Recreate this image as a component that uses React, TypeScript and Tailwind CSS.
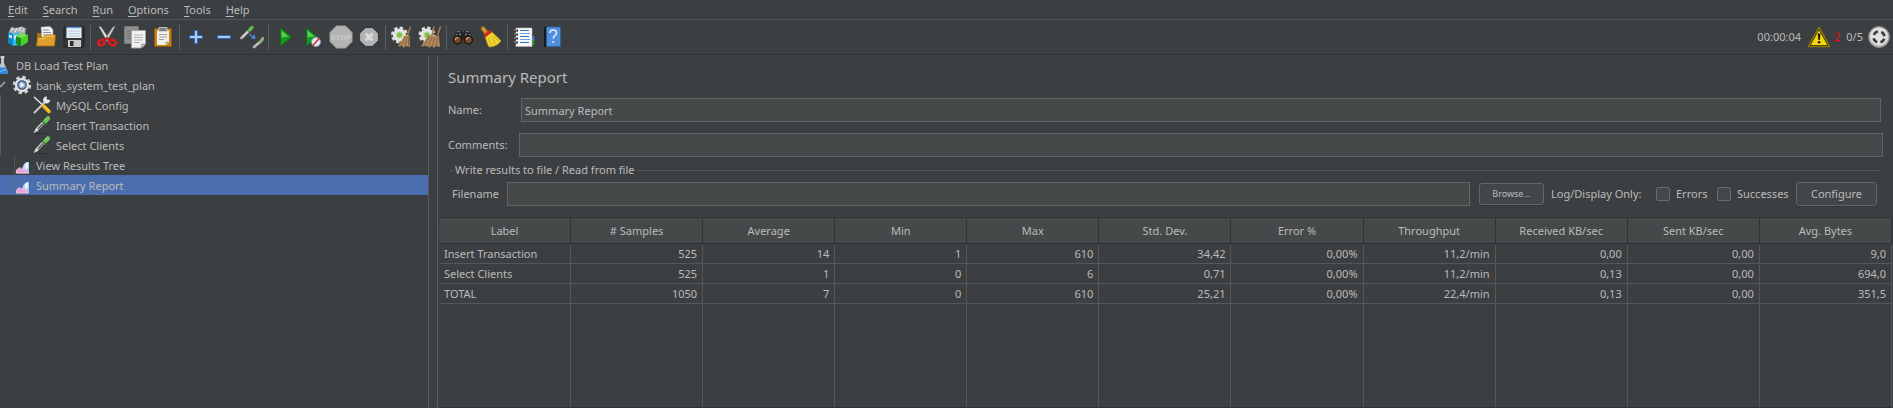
import React, { type ReactNode } from "react";

const menus = ["Edit", "Search", "Run", "Options", "Tools", "Help"];

const columns = [
  "Label", "# Samples", "Average", "Min", "Max", "Std. Dev.", "Error %",
  "Throughput", "Received KB/sec", "Sent KB/sec", "Avg. Bytes",
];

const rows = [
  ["Insert Transaction", "525", "14", "1", "610", "34,42", "0,00%", "11,2/min", "0,00", "0,00", "9,0"],
  ["Select Clients", "525", "1", "0", "6", "0,71", "0,00%", "11,2/min", "0,13", "0,00", "694,0"],
  ["TOTAL", "1050", "7", "0", "610", "25,21", "0,00%", "22,4/min", "0,13", "0,00", "351,5"],
];

function Icon({ children }: { children: ReactNode }) {
  return (
    <svg viewBox="0 0 24 24" className="size-6 shrink-0" aria-hidden="true">
      {children}
    </svg>
  );
}

function Templates() {
  return (
    <Icon>
      <path d="M3 7 5 2l5 1 6-1.500 4 2L19 11H4z" fill="#a3b1b8" />
      <path d="m5 6 2-3M9 7l2-4M13 6l2-4M16 7l2-3" stroke="#e4eaec" strokeWidth="1.200" />
      <path d="m2 7 5 2v12l-5-3z" fill="#1286c4" />
      <path d="m7 9 6-2v13l-6 1z" fill="#35b8ec" />
      <path d="M3 9.500l3 1v3l-3-1zM8 10.500l3-1v4l-3 1z" fill="#bfeaf9" />
      <path d="m10 11 6-3 6 2-6 4z" fill="#7bdc50" />
      <path d="m10 11 5 3v7.500l-5-3z" fill="#1f8a1c" />
      <path d="m15 13.500 7-3.500v7l-7 4.500z" fill="#4cd32a" />
    </Icon>
  );
}

function OpenFile() {
  return (
    <Icon>
      <path d="M3 8h6l1 2v10H3z" fill="#a8700f" />
      <path d="m7 2 9-.5 3 3V15H8z" fill="#f3f3f3" stroke="#999" strokeWidth=".5" />
      <path d="M9 5h6M9 7.500h8M9.500 10H17" stroke="#8d8d8d" />
      <path d="M3.500 12.500h6l2-2.500h10l-1 11H2.500z" fill="#dfa02c" stroke="#a8700f" strokeWidth=".8" />
      <path d="M4.500 13.500h5.500l2-2.500H20.500" stroke="#f3c766" fill="none" />
    </Icon>
  );
}

function Save() {
  return (
    <Icon>
      <rect x="2" y="2" width="20" height="20" rx="1.500" fill="#343638" stroke="#1b1c1d" />
      <rect x="4.500" y="2" width="15" height="11" fill="#eaf2fa" />
      <path d="M4.500 2.500h15" stroke="#5f9ad8" strokeWidth="1.500" />
      <path d="M6 6h12M6 8.500h12M6 11h12" stroke="#a9bccf" strokeWidth=".8" />
      <rect x="6" y="15" width="13" height="7" fill="#c9cbcc" />
      <rect x="8" y="16" width="3.500" height="5" fill="#2b2c2d" />
    </Icon>
  );
}

function Cut() {
  return (
    <Icon>
      <path d="M4 1.500 6 2l8 12-2 2z" fill="#e8e8e8" stroke="#999" strokeWidth=".5" />
      <path d="m20 1.500-2 .5-8 12 2 2z" fill="#cfcfcf" stroke="#888" strokeWidth=".5" />
      <ellipse cx="6.500" cy="17.500" rx="3.400" ry="2.700" transform="rotate(-25 6.500 17.500)" fill="none" stroke="#e01b1b" strokeWidth="2.400" />
      <ellipse cx="17.500" cy="17.500" rx="3.400" ry="2.700" transform="rotate(25 17.500 17.500)" fill="none" stroke="#e01b1b" strokeWidth="2.400" />
      <path d="m9 15.500 3-2.500 3 2.500" stroke="#c01010" strokeWidth="2" fill="none" />
    </Icon>
  );
}

function Copy() {
  return (
    <Icon>
      <path d="M1.500 1.500h14v17h-14z" fill="#8e9090" stroke="#777" />
      <path d="M4 6h8M4 8.500h8M4 11h8M4 13.500h5" stroke="#6c6e6e" />
      <path d="M8.500 5.500h14V19l-4 4h-10z" fill="#f1f1ef" stroke="#a5a5a0" />
      <path d="M22.500 19h-4v4z" fill="#c4c4c0" stroke="#8b8b86" strokeWidth=".6" />
      <path d="M11 10h9M11 12.500h9M11 15h9M11 17.500h6" stroke="#b4b4b0" />
    </Icon>
  );
}

function Paste() {
  return (
    <Icon>
      <rect x="3.500" y="3.500" width="17" height="18" rx="1" fill="#c58218" stroke="#8f5a0a" />
      <path d="M6 5.500h12V17l-3 3H6z" fill="#f1f1ef" />
      <path d="M18 16.500h-3.500V20z" fill="#aaa" />
      <path d="M8 2.500h8v4H8z" fill="#7e8183" stroke="#d2d4d5" strokeWidth=".8" />
      <path d="M8 9.500h8M8 12h8M8 14.500h5" stroke="#a0a09c" />
    </Icon>
  );
}

function Plus() {
  return (
    <Icon>
      <path d="M10.500 5.500h3v5h5v3h-5v5h-3v-5h-5v-3h5z" fill="#a9cbf5" stroke="#2f66b8" />
    </Icon>
  );
}

function Minus() {
  return (
    <Icon>
      <path d="M5.500 10.500h13v3h-13z" fill="#a9cbf5" stroke="#2f66b8" />
    </Icon>
  );
}

function Toggle() {
  return (
    <Icon>
      <path d="m1.500 13 7-7" stroke="#b9b9b9" strokeWidth="2.600" strokeLinecap="round" />
      <path d="m2.500 12 5-5" stroke="#f6f6f6" strokeWidth="1" />
      <path d="m7.500 4.500 3.500 3.500" stroke="#444" strokeWidth="1.600" />
      <path d="m9.500 5 2.500-2.500" stroke="#6cb85a" strokeWidth="3.200" strokeLinecap="round" />
      <path d="m9 9 5 4" stroke="#4a86e0" strokeWidth="1.300" />
      <path d="m15.500 14-1-5-3.500 4.500z" fill="#4a86e0" />
      <path d="m14 22 6-5" stroke="#bdbdbd" strokeWidth="2.600" strokeLinecap="round" />
      <path d="m20.500 16.500 2.500-3" stroke="#86b07a" strokeWidth="3.200" strokeLinecap="round" />
    </Icon>
  );
}

function Run() {
  return (
    <Icon>
      <path d="m7.500 3 11 9-11 9z" fill="#159a1c" stroke="#0c6b12" strokeWidth=".8" />
      <path d="m8.500 5.500 7 6-7 1z" fill="#57d04f" />
    </Icon>
  );
}

function RunNoTimers() {
  return (
    <Icon>
      <path d="m5.500 3 11 9-11 9z" fill="#159a1c" stroke="#0c6b12" strokeWidth=".8" />
      <path d="m6.500 5.500 7 6-7 1z" fill="#57d04f" />
      <circle cx="15" cy="17" r="4.500" fill="#dfe9f5" stroke="#7f9fc8" />
      <path d="m11.500 21 7-8" stroke="#df2a2a" strokeWidth="1.500" />
    </Icon>
  );
}

function Stop() {
  return (
    <Icon>
      <path d="M7.500 1h9L23 7.500v9L16.500 23h-9L1 16.500v-9z" fill="#b3b3b3" stroke="#a6a6a6" />
      <text x="12" y="15" textAnchor="middle" fontSize="8" fontWeight="700" fontFamily="Roboto, sans-serif" fill="#cacaca">STOP</text>
    </Icon>
  );
}

function Shutdown() {
  return (
    <Icon>
      <path d="M8.500 3.500h7l5 5v7l-5 5h-7l-5-5v-7z" fill="#b3b3b3" stroke="#a6a6a6" />
      <path d="m8.500 8.500 7 7m0-7-7 7" stroke="#dadada" strokeWidth="3" />
    </Icon>
  );
}

function Gear({ cx, cy }: { cx: number; cy: number }) {
  return (
    <g>
      <circle cx={cx} cy={cy} r="7" fill="none" stroke="#dcdcdc" strokeWidth="3" strokeDasharray="3.200 2.298" />
      <circle cx={cx} cy={cy} r="6.600" fill="#e3e3e3" />
      <circle cx={cx} cy={cy} r="3" fill="#7cc243" stroke="#b9d79b" />
    </g>
  );
}

function Clear() {
  return (
    <Icon>
      <Gear cx={9.500} cy={10} />
      <path d="m20.500 1.500-3 9" stroke="#a47748" strokeWidth="1.600" />
      <path d="M14.500 10.500h5L20 22l-5-1-1 2-2-2-4 .5z" fill="#b0875b" />
      <path d="m15 12-4 9M17 12l-2 9M18.500 12v9" stroke="#85603b" strokeWidth=".8" />
    </Icon>
  );
}

function ClearAll() {
  return (
    <Icon>
      <Gear cx={9} cy={10} />
      <path d="m16 1.500-2 9M22.500 1.500l-3 9" stroke="#a47748" strokeWidth="1.600" />
      <path d="m10 10.500 4.500-1 2 2 4.500-1L22 22l-4-1-2 2-2-2-3 1.500-2-1.500-6 .5z" fill="#b0875b" />
      <path d="m11 12-5 9M14 12l-4 9M17 12l-3 9M20 12l-2 9" stroke="#85603b" strokeWidth=".8" />
    </Icon>
  );
}

function Binoculars() {
  return (
    <Icon>
      <path d="m5.500 6 4-1 2.500 3 2.500-3 4 1L22 14l-8 3-2-3-2 3-8-3z" fill="#232425" />
      <path d="m6 7 3-1M15 6l3 1M6 9l-2 3M18 9l2 3M9 8v3M15 8v3" stroke="#83878a" strokeWidth="1.200" />
      <circle cx="6.500" cy="15" r="4" fill="#7a4426" stroke="#191919" strokeWidth="1.500" />
      <circle cx="17.500" cy="15" r="4" fill="#7a4426" stroke="#191919" strokeWidth="1.500" />
      <path d="M4.500 15a2 2 0 0 1 3-2M15.500 15a2 2 0 0 1 3-2" stroke="#dba27c" strokeWidth="1.200" fill="none" />
    </Icon>
  );
}

function ResetSearch() {
  return (
    <Icon>
      <path d="m4 3.500 4 5" stroke="#a8741c" strokeWidth="4.500" strokeLinecap="round" />
      <path d="m4 3.500 3.500 4.500" stroke="#dba544" strokeWidth="2" strokeLinecap="round" />
      <path d="m6 11 7-4c4 4 7 6 9 9-3 4-7 6-12 6-2-3-3-7-4-11z" fill="#f0d532" stroke="#a98b10" strokeWidth=".8" />
      <path d="m9 13 4 8M12 12l5 7M13.500 10.500 20 16" stroke="#c4a61e" strokeWidth=".8" />
      <path d="m5.500 11 6.500-5" stroke="#d7261e" strokeWidth="3" />
    </Icon>
  );
}

function FunctionHelper() {
  return (
    <Icon>
      <path d="M17 11h5.500v4H17z" fill="#2c7be5" />
      <path d="M17 15h5.500v5H17z" fill="#1c8a2e" />
      <path d="M4 3h16v18.500H4z" fill="#f7f7f7" stroke="#bbb" strokeWidth=".6" />
      <path d="M8 5.500h9M8 11.500h9M8 17.500h9" stroke="#2f6fd0" strokeWidth="1.200" />
      <path d="M8 8.500h10M8 14.500h10" stroke="#6b9fe8" strokeWidth="1.200" />
      <path d="M2 5.500h4M2 9.500h4M2 13.500h4M2 17.500h4" stroke="#1f1f1f" strokeWidth="2" />
      <path d="M2 5h3M2 9h3M2 13h3M2 17h3" stroke="#d8d8d8" strokeWidth=".8" />
    </Icon>
  );
}

function Help() {
  return (
    <Icon>
      <path d="m4 2 3-.5V22H4z" fill="#161b22" />
      <path d="M6.500 2H20.500v19.500h-14z" fill="#4f8fdc" stroke="#2b5fa6" strokeWidth=".8" />
      <path d="M10 8c0-4 6.500-4 6.500 0 0 2.500-3.200 2.500-3.200 5.500" fill="none" stroke="#dbe9fb" strokeWidth="1.600" />
      <circle cx="13.200" cy="17" r="1.100" fill="#dbe9fb" />
    </Icon>
  );
}

const toolGroups: { name: string; icon: ReactNode }[][] = [
  [{ name: "Templates", icon: <Templates /> }, { name: "Open", icon: <OpenFile /> }, { name: "Save", icon: <Save /> }],
  [{ name: "Cut", icon: <Cut /> }, { name: "Copy", icon: <Copy /> }, { name: "Paste", icon: <Paste /> }],
  [{ name: "Expand all", icon: <Plus /> }, { name: "Collapse all", icon: <Minus /> }, { name: "Toggle", icon: <Toggle /> }],
  [
    { name: "Start", icon: <Run /> }, { name: "Start no pauses", icon: <RunNoTimers /> },
    { name: "Stop", icon: <Stop /> }, { name: "Shutdown", icon: <Shutdown /> },
  ],
  [{ name: "Clear", icon: <Clear /> }, { name: "Clear all", icon: <ClearAll /> }],
  [{ name: "Search", icon: <Binoculars /> }, { name: "Reset search", icon: <ResetSearch /> }],
  [{ name: "Function helper", icon: <FunctionHelper /> }, { name: "Help", icon: <Help /> }],
];

function Toolbar() {
  return (
    <div className="flex h-[35px] items-center border-b border-[#323232] pl-1 pr-[2px]">
      {toolGroups.map((group, i) => (
        <div key={i} className="flex items-center">
          {i > 0 && <span className="mx-[2px] h-[25px] w-px bg-[#5a5d5f]" />}
          {group.map((tool) => (
            <button key={tool.name} type="button" aria-label={tool.name} className="flex w-7 justify-center">
              {tool.icon}
            </button>
          ))}
        </div>
      ))}
      <div className="ml-auto flex items-center">
        <span>00:00:04</span>
        <button type="button" aria-label="Show log" className="ml-[6px]">
          <Icon>
            <path d="M12 2.500 22.500 21.500h-21z" fill="#f6d50f" stroke="#8a7706" strokeWidth="1.600" strokeLinejoin="round" />
            <path d="M12 4.500 21 20.500H3z" fill="none" stroke="#2e2a08" strokeWidth=".8" />
            <path d="M10.800 8.500h2.600l-.6 6.500h-1.400z" fill="#141414" />
            <circle cx="12.100" cy="17.300" r="1.300" fill="#141414" />
          </Icon>
        </button>
        <span className="ml-[3px] text-[#ff0000]">2</span>
        <span className="ml-[6px]">0/5</span>
        <span className="ml-1">
          <Icon>
            <circle cx="12" cy="12" r="10.500" fill="#b8b8b8" stroke="#858585" />
            <circle cx="12" cy="11.500" r="9" fill="#e2e2e2" />
            <circle cx="12" cy="12" r="5.500" fill="none" stroke="#3c3f41" strokeWidth="2.600" strokeDasharray="5.200 3.440" strokeDashoffset="-1.720" />
          </Icon>
        </span>
      </div>
    </div>
  );
}

const flask = (
  <svg viewBox="0 0 20 20" className="-ml-2 size-5 shrink-0" aria-hidden="true">
    <path d="M9 2h3v6l4 9q0 2-2 2H5l-1-2 5-9z" fill="#b9c6cf" />
    <path d="M8 12.500h5.800l2 4.500q0 2-2 2H5l-1-2z" fill="#2f86dd" />
    <path d="m8 17 3-2h3" stroke="#8cc4f7" fill="none" />
    <path d="M8.500 2H12.500" stroke="#eee" strokeWidth="1.500" />
  </svg>
);

const threadGroup = (
  <svg viewBox="0 0 20 20" className="size-5 shrink-0" aria-hidden="true">
    <circle cx="10" cy="10" r="8" fill="none" stroke="#d2d4d8" strokeWidth="2.400" strokeDasharray="3.500 2.783" />
    <circle cx="10" cy="10" r="7.200" fill="#dfe1e4" />
    <circle cx="10" cy="10" r="4.200" fill="#8fb0d6" stroke="#3a5478" strokeWidth="1.200" />
    <path d="m8.500 7.500 4 2.500-4 2.500z" fill="#fff" />
  </svg>
);

const tools = (
  <svg viewBox="0 0 20 20" className="size-5 shrink-0" aria-hidden="true">
    <path d="m2.500 17.500 11-11" stroke="#c9c9c9" strokeWidth="2" strokeLinecap="round" />
    <path d="M18 4.500a3.500 3.500 0 1 1-3-3L14.500 4 16 5z" fill="#e6e6e6" />
    <path d="m2 2 10 9" stroke="#e9e9e9" strokeWidth="1.400" />
    <path d="m11.500 11 5.500 5.500" stroke="#efb810" strokeWidth="3.600" strokeLinecap="round" />
    <path d="m12.500 11 4.500 4.500" stroke="#fbe27a" />
  </svg>
);

const pipette = (
  <svg viewBox="0 0 20 20" className="size-5 shrink-0" aria-hidden="true">
    <path d="M3 18.500h13" stroke="#2e3032" />
    <path d="m2 17.500 3-3" stroke="#d0d0d0" strokeWidth="1.200" />
    <path d="m4.500 15 7-7.500" stroke="#d8d8d8" strokeWidth="3.200" strokeLinecap="round" />
    <path d="m6 14 5-5.500" stroke="#4c5557" strokeWidth="1.200" />
    <path d="m10 5.500 4.500 4.500" stroke="#2f6a2a" strokeWidth="1.800" />
    <path d="m13.500 6 2.500-2.500" stroke="#6cbc58" strokeWidth="4.500" strokeLinecap="round" />
    <path d="m13 5 2.500-2.500" stroke="#a7e096" strokeWidth="1" />
  </svg>
);

const chart = (
  <svg viewBox="0 0 20 20" className="size-5 shrink-0" aria-hidden="true">
    <path d="M2.500 2v16" stroke="#6b6e70" strokeDasharray="1 1" />
    <path d="M3 18.500h15" stroke="#77797b" />
    <path d="m10 13 2-4 2.500-2H17v11h-7z" fill="#a9c4f0" />
    <path d="m13 9 3-2v6l-2 1.500-1.500-2z" fill="#eaf2ff" />
    <path d="m4.500 15 3-2.500 2.500 2 2-.5 4 4h-11.500z" fill="#ea9fd8" stroke="#f7cdee" strokeWidth=".8" />
  </svg>
);

const tree = [
  { label: "DB Load Test Plan", icon: flask, row: "pl-0" },
  { label: "bank_system_test_plan", icon: threadGroup, row: "pl-3", open: true },
  { label: "MySQL Config", icon: tools, row: "border-l border-[#5a5d5f] pl-[31px]" },
  { label: "Insert Transaction", icon: pipette, row: "border-l border-[#5a5d5f] pl-[31px]" },
  { label: "Select Clients", icon: pipette, row: "border-l border-[#5a5d5f] pl-[31px]" },
  { label: "View Results Tree", icon: chart, row: "pl-3" },
  { label: "Summary Report", icon: chart, row: "bg-[#4b6eaf] pl-3", selected: true },
];

function Tree() {
  return (
    <ul role="tree" className="w-[429px] shrink-0 overflow-hidden border-r border-[#5a5d5f]">
      {tree.map((node) => (
        <li
          key={node.label}
          role="treeitem"
          aria-selected={!!node.selected}
          className={`relative flex h-5 items-center gap-1 ${node.row}`}
        >
          {node.open && (
            <svg viewBox="0 0 6 10" className="absolute left-0 top-[5px] h-[10px] w-[6px]" aria-hidden="true">
              <path d="m0 7 5-5" stroke="#b0b2b3" strokeWidth="1.500" />
            </svg>
          )}
          {node.icon}
          <span className="pt-[2px]">{node.label}</span>
        </li>
      ))}
    </ul>
  );
}

const field = "h-6 min-w-0 flex-1 border border-[#646464] bg-[#45494a] px-[3px] outline-none";
const button = "rounded-[3px] border border-[#646769] bg-[#424648] shadow-[0_1px_0_#323537]";
const tick = "size-[14px] appearance-none rounded-[2px] border border-[#6b6b6b] bg-[#43494a] checked:bg-[#4b6eaf]";

function Report() {
  return (
    <main className="ml-2 flex min-w-0 flex-1 flex-col border-l border-[#5a5d5f]">
      <h1 className="mb-[10px] mt-[11px] pl-[10px] text-[15px] leading-[22px]">Summary Report</h1>
      <div className="flex items-center pl-[10px] pr-3">
        <label htmlFor="name" className="w-[73px]">Name:</label>
        <input id="name" className={field} defaultValue="Summary Report" />
      </div>
      <div className="mt-[11px] flex items-center pl-[10px] pr-[10px]">
        <label htmlFor="comments" className="w-[71px]">Comments:</label>
        <input id="comments" className={field} />
      </div>
      <fieldset className="mb-[11px] mt-[5px] pl-3 pr-3">
        <legend className="flex w-full items-center gap-[2px]">
          <span className="h-px w-[3px] bg-[#555555]" />
          Write results to file / Read from file
          <span className="h-px flex-1 bg-[#555555]" />
        </legend>
        <div className="mt-1 flex items-center pl-[2px] pr-1">
          <label htmlFor="filename" className="w-[55px]">Filename</label>
          <input id="filename" className={field} />
          <button type="button" className={`ml-[9px] h-[22px] w-[65px] text-[9px] ${button}`}>Browse...</button>
          <span className="ml-[7px] w-[105px]">Log/Display Only:</span>
          <label className="flex w-[61px] items-center gap-[6px]">
            <input type="checkbox" className={tick} />
            Errors
          </label>
          <label className="flex w-[79px] items-center gap-[6px]">
            <input type="checkbox" className={tick} />
            Successes
          </label>
          <button type="button" className={`h-6 w-[81px] ${button}`}>Configure</button>
        </div>
      </fieldset>
      <div className="mx-px grid flex-1 border-y border-[#323232]">
        <table className="w-full table-fixed border-separate border-spacing-0">
          <thead>
            <tr className="h-[26px]">
              {columns.map((c) => (
                <th key={c} className="border-b border-r border-[#323232] bg-[#45494a] p-0 font-normal">{c}</th>
              ))}
            </tr>
          </thead>
          <tbody>
            {rows.map((r) => (
              <tr key={r[0]} className="h-5">
                {r.map((v, i) => (
                  <td
                    key={i}
                    className={`border-b border-r border-[#555758] px-[5px] py-0 ${i === 0 ? "text-left" : "text-right"}`}
                  >
                    {v}
                  </td>
                ))}
              </tr>
            ))}
            <tr>
              {columns.map((c) => (
                <td key={c} className="border-r border-[#555758] p-0" />
              ))}
            </tr>
          </tbody>
        </table>
      </div>
    </main>
  );
}

export default function App() {
  return (
    <div className="flex min-h-screen flex-col bg-[#3c3f41] font-['Noto_Sans','Open_Sans',sans-serif] text-[11px] leading-4 text-[#bbbbbb]">
      <nav className="flex h-5 items-center gap-[15px] border-b border-[#555555] pl-2">
        {menus.map((m) => (
          <button key={m} type="button">
            <span className="underline underline-offset-2">{m[0]}</span>
            {m.slice(1)}
          </button>
        ))}
      </nav>
      <Toolbar />
      <div className="flex flex-1">
        <Tree />
        <Report />
      </div>
    </div>
  );
}
